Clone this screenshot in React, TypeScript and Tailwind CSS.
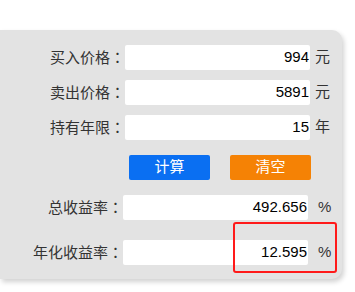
import React from "react";

const font = { fontFamily: '"Liberation Sans", "Noto Sans CJK SC", Arial, sans-serif' };
const colonFont = { fontFamily: '"Noto Sans CJK JP", "Noto Sans CJK TC", sans-serif' };

function Label({ text, w }: { text: string; w: string }) {
  return (
    <div className={`${w} text-right text-[15px] text-[#333] whitespace-nowrap`}>
      {text}
      <span style={colonFont}>：</span>
    </div>
  );
}

function Row({ label, value, unit }: { label: string; value: string; unit: string }) {
  return (
    <div className="flex items-center h-[25px]">
      <Label text={label} w="w-[125px]" />
      <div className="w-[185px] h-[25px] bg-white rounded-[2px] flex items-center justify-end pr-[1px] text-[15px] text-black">
        {value}
      </div>
      <div className="ml-[5px] text-[15px] text-[#333]">{unit}</div>
    </div>
  );
}

function ResultRow({ label, value }: { label: string; value: string }) {
  return (
    <div className="flex items-center h-[25px]">
      <Label text={label} w="w-[123px]" />
      <div className="w-[185px] h-[25px] bg-white rounded-[2px] flex items-center justify-end pr-[1px] text-[15px] text-black">
        {value}
      </div>
      <div className="ml-[10px] text-[15px] text-[#333]">%</div>
    </div>
  );
}

export default function App() {
  return (
    <div className="w-[355px] h-[292px] bg-white pt-[30px]" style={font}>
      <div className="relative w-[342px] h-[249px] bg-[#e3e3e3] rounded-r-[10px] shadow-[2px_3px_5px_rgba(0,0,0,0.18)] pt-[15px]">
        <div className="flex flex-col gap-[10px]">
          <Row label="买入价格" value="994" unit="元" />
          <Row label="卖出价格" value="5891" unit="元" />
          <Row label="持有年限" value="15" unit="年" />
        </div>
        <div className="flex mt-[15px] pl-[129px] gap-[20px]">
          <div className="w-[81px] h-[25px] bg-[#0a6ff2] rounded-[2px] flex items-center justify-center text-white text-[15px]">计算</div>
          <div className="w-[81px] h-[25px] bg-[#f58205] rounded-[2px] flex items-center justify-center text-white text-[15px]">清空</div>
        </div>
        <div className="mt-[15px]">
          <ResultRow label="总收益率" value="492.656" />
        </div>
        <div className="mt-[20px]">
          <ResultRow label="年化收益率" value="12.595" />
        </div>
        <div className="absolute left-[233px] top-[192px] w-[104px] h-[51px] border-2 border-[#ff1a1a] rounded-[3px]" />
      </div>
    </div>
  );
}
